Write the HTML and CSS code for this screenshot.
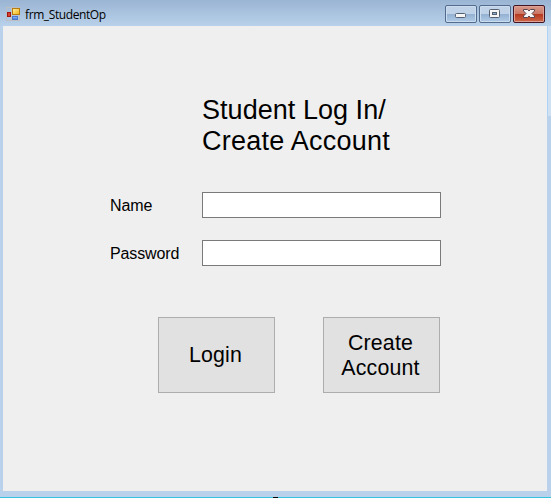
FILE: index.html
```
<!DOCTYPE html>
<html lang="en">
<head>
<meta charset="utf-8">
<title>frm_StudentOp</title>
<link rel="stylesheet" href="styles.css">
</head>
<body>
<div class="window">
  <header class="titlebar">
    <svg class="app-icon" width="14" height="14" viewBox="0 0 14 14">
      <defs>
        <linearGradient id="gold" x2="1" y2="1"><stop offset="0" stop-color="#fff3a0"/><stop offset="1" stop-color="#f0b010"/></linearGradient>
        <linearGradient id="blue" x2="0" y2="1"><stop offset="0" stop-color="#9cc4fa"/><stop offset="1" stop-color="#3872dc"/></linearGradient>
      </defs>
      <rect x=".5" y=".5" width="13" height="13" fill="none" stroke="#bcbfc2"/>
      <path d="M5.500 1v12M1 9.500h12" stroke="#c4c4c2"/>
      <rect x="1.500" y="5.500" width="3" height="4" fill="#d8402c" stroke="#a01815"/>
      <rect x="6.500" y="1.500" width="7" height="6" fill="url(#gold)" stroke="#b77b12"/>
      <rect x="6.500" y="9.500" width="5" height="3" fill="url(#blue)" stroke="#4a78ce"/>
    </svg>
    <span class="caption">frm_StudentOp</span>
    <div class="controls">
      <span class="control"><svg width="30" height="16" viewBox="0 0 30 16"><rect x="9.500" y="7.500" width="10" height="4" rx="1" fill="#f6f6f6" stroke="#555f72"/></svg></span>
      <span class="control"><svg width="30" height="16" viewBox="0 0 30 16"><rect x="9.500" y="3.500" width="10" height="8" rx="1" fill="#f6f6f6" stroke="#555f72"/><rect x="12.500" y="6.500" width="4" height="2" fill="#8dabcf" stroke="#555f72"/></svg></span>
      <span class="control close"><svg width="30" height="16" viewBox="0 0 30 16"><path d="M9.500 3.500h4l1.500 1.500 1.500-1.500h4v1.500l-2.500 2.500 2.500 2.500v1.500h-4l-1.500-1.500-1.500 1.500h-4v-1.500l2.500-2.500-2.500-2.500z" fill="#f6f6f6" stroke="#5b4550" stroke-linejoin="round"/></svg></span>
    </div>
  </header>
  <main class="form">
    <h1 class="heading"><span class="first-line">Student Log In/</span><br>Create Account</h1>
    <div class="fields">
      <label for="name">Name</label>
      <input id="name" type="text">
      <label for="password">Password</label>
      <input id="password" type="password">
    </div>
    <div class="actions">
      <button type="button">Login</button>
      <button type="button">Create<br>Account</button>
    </div>
  </main>
  <footer class="edge"><span class="mark"></span></footer>
</div>
</body>
</html>
```
FILE: styles.css
```
* { box-sizing: border-box; }
body { margin: 0; font-family: "Liberation Sans", Arial, sans-serif; color: #000; }
.window {
  width: 551px;
  height: 498px;
  padding: 0 4px 0 3px;
  display: flex;
  flex-direction: column;
  background:
    linear-gradient(#9ab4d3, #b9d1ea) 0 0 / 100% 26px no-repeat,
    linear-gradient(90deg, #add3f5 1px, #cfe0f3 1px) 100% 26px / 4px 90px no-repeat,
    #b9d1ea;
}
.titlebar { height: 26px; flex: none; display: flex; padding: 0 2px 0 3px; }
.app-icon { margin-top: 7px; flex: none; }
.caption {
  margin: 6px 0 0 5px;
  font: 12px/18px "Open Sans", "Noto Sans", sans-serif;
  letter-spacing: -0.4px;
}
.controls { display: flex; gap: 2px; margin: 5px 0 0 auto; }
.control {
  width: 32px;
  height: 18px;
  border: 1px solid #536c8d;
  border-radius: 2px;
  background: linear-gradient(#bfd2e8 0 50%, #93b0d1 50%, #b0cbe7);
  box-shadow: inset 0 0 0 1px #cbdcee;
}
.control svg { display: block; }
.close {
  border-color: #431422;
  background: linear-gradient(#d89a8c, #ca7563 50%, #b33820 50%, #ce6747);
  box-shadow: inset 0 0 0 1px #dda197;
}
.form { height: 465px; background: #efefef; padding: 69px 106px 0 107px; }
.heading { margin: 0 0 0 92px; font-size: 27px; font-weight: 400; line-height: 31px; letter-spacing: 0.24px; height: 62px; white-space: nowrap; }
.first-line { letter-spacing: 0.04px; }
.fields { margin-top: 35px; display: grid; grid-template-columns: 92px 239px; row-gap: 22px; }
.fields label { font-size: 16px; line-height: 26px; padding-top: 1px; height: 26px; letter-spacing: -0.12px; }
.fields input { width: 239px; height: 26px; border: 1px solid #7a7a7a; background: #fff; padding: 2px; margin: 0; }
.actions { display: flex; gap: 48px; margin: 51px 0 0 48px; }
.actions button {
  width: 117px;
  height: 76px;
  padding: 1px 2px 0 0;
  border: 1px solid #adadad;
  background: #e1e1e1;
  color: #000;
  font: 21.33px/25px "Liberation Sans", Arial, sans-serif;
  letter-spacing: 0.2px;
}
.edge { height: 7px; margin: 0 -4px 0 -3px; padding-left: 273px; border-bottom: 1px solid #35c3df; }
.mark { display: block; position: relative; top: 6px; width: 5px; height: 1px; background: #000; }
```
